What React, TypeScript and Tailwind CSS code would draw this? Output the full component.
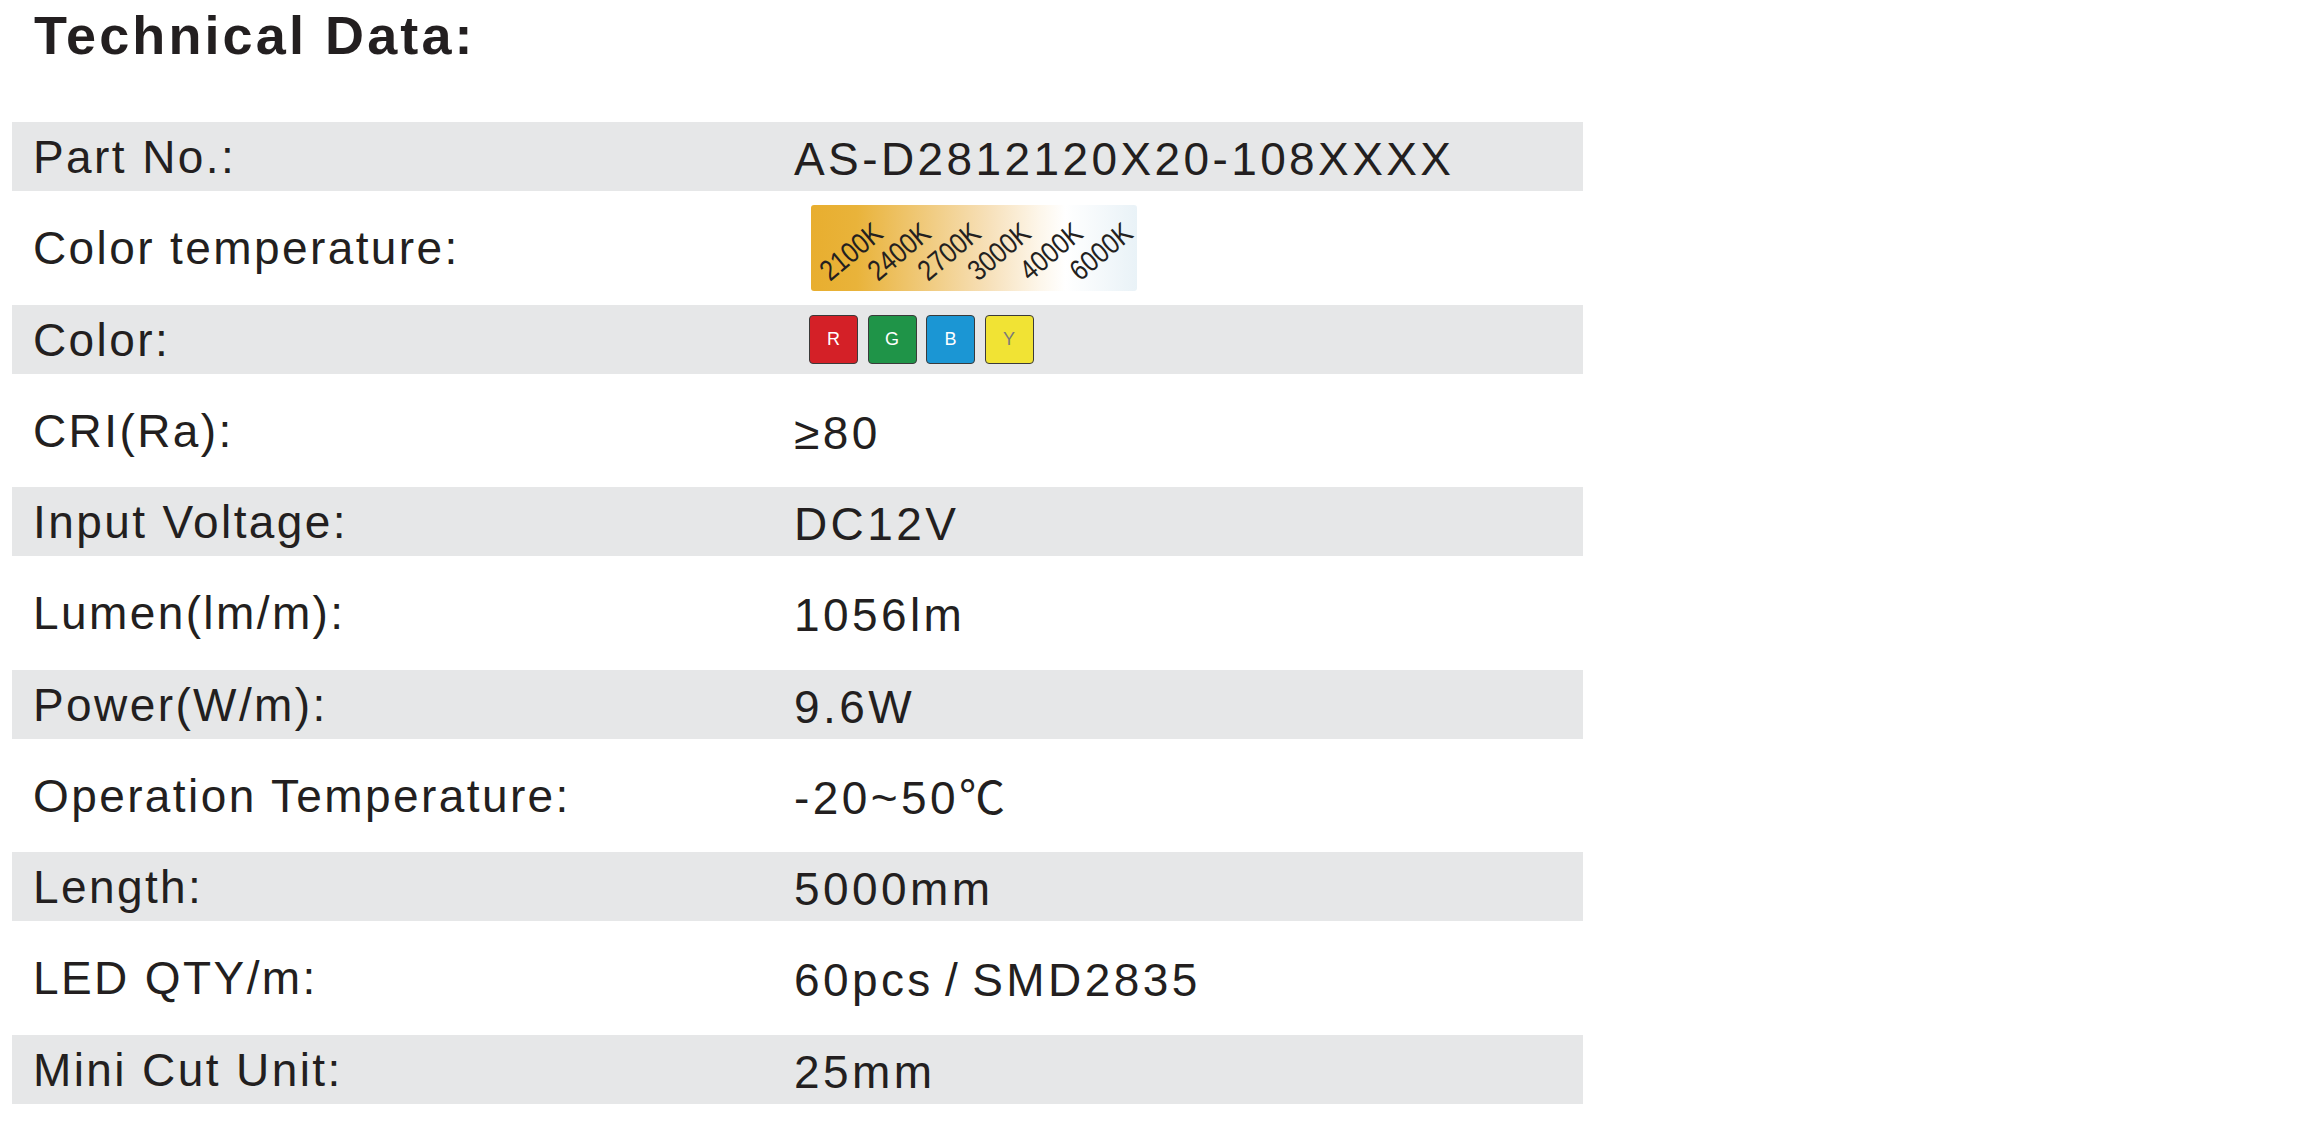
import React from "react";

const FONT = "font-['Liberation_Sans','Noto_Sans_CJK_SC',sans-serif]";

function ColorTemp() {
  const labels = [
    { t: "2100K", x: 19 },
    { t: "2400K", x: 67 },
    { t: "2700K", x: 117 },
    { t: "3000K", x: 167 },
    { t: "4000K", x: 219 },
    { t: "6000K", x: 269 },
  ];
  return (
    <svg width="326" height="86" viewBox="0 0 326 86" className="block tracking-normal" letterSpacing="0">
      <defs>
        <linearGradient id="ctgrad" x1="0" y1="0" x2="1" y2="0">
          <stop offset="0" stopColor="#e8ae2f" />
          <stop offset="0.14" stopColor="#e9b33a" />
          <stop offset="0.35" stopColor="#f0ca7c" />
          <stop offset="0.55" stopColor="#f7e1bb" />
          <stop offset="0.7" stopColor="#fdf6ea" />
          <stop offset="0.78" stopColor="#ffffff" />
          <stop offset="1" stopColor="#e9f2f7" />
        </linearGradient>
      </defs>
      <rect x="0" y="0" width="326" height="86" rx="3" fill="url(#ctgrad)" />
      {labels.map((l) => (
        <text
          key={l.t}
          x={0}
          y={0}
          transform={`translate(${l.x} 77) rotate(-40) scale(0.85 1)`}
          fontSize="29"
          fill="#231f20"
          letterSpacing="0"
          fontFamily="Liberation Sans, Arial, sans-serif"
        >
          {l.t}
        </text>
      ))}
    </svg>
  );
}

function Swatches() {
  return (
    <div className="flex gap-[9.5px] tracking-normal">
      <div className="w-[49px] h-[49px] rounded-[4px] border border-[#3a3a3a] bg-[#d42027] flex items-center justify-center text-white text-[18px] font-light">R</div>
      <div className="w-[49px] h-[49px] rounded-[4px] border border-[#3a3a3a] bg-[#1f9448] flex items-center justify-center text-white text-[18px] font-light">G</div>
      <div className="w-[49px] h-[49px] rounded-[4px] border border-[#3a3a3a] bg-[#1b96d4] flex items-center justify-center text-white text-[18px] font-light">B</div>
      <div className="w-[49px] h-[49px] rounded-[4px] border border-[#3a3a3a] bg-[#f1e334] flex items-center justify-center text-[#7a7a7a] text-[18px] font-light">Y</div>
    </div>
  );
}

type Row = { label: string; value: React.ReactNode; gray: boolean; h: string };

const rows: Row[] = [
  { label: "Part No.:", value: "AS-D2812120X20-108XXXX", gray: true, h: "h-[69px]" },
  { label: "Color temperature:", value: <div className="ml-[17px]"><ColorTemp /></div>, gray: false, h: "h-[114px]" },
  { label: "Color:", value: <div className="ml-[15px]"><Swatches /></div>, gray: true, h: "h-[69px]" },
  { label: "CRI(Ra):", value: "≥80", gray: false, h: "h-[113px]" },
  { label: "Input Voltage:", value: "DC12V", gray: true, h: "h-[69px]" },
  { label: "Lumen(lm/m):", value: "1056lm", gray: false, h: "h-[114px]" },
  { label: "Power(W/m):", value: "9.6W", gray: true, h: "h-[69px]" },
  { label: "Operation Temperature:", value: "-20~50℃", gray: false, h: "h-[113px]" },
  { label: "Length:", value: "5000mm", gray: true, h: "h-[69px]" },
  {
    label: "LED QTY/m:",
    value: <span className="[word-spacing:-5px]">60pcs / SMD2835</span>,
    gray: false,
    h: "h-[114px]",
  },
  { label: "Mini Cut Unit:", value: "25mm", gray: true, h: "h-[69px]" },
];

export default function App() {
  return (
    <div className={`min-h-screen w-full bg-white text-[#231f20] ${FONT} pt-[8px] pl-[12px]`}>
      <h1 className="ml-[22px] text-[54px] leading-none font-bold tracking-[3.1px]">Technical Data:</h1>
      <div className="mt-[60px] w-[1571px] flex flex-col">
        {rows.map((r, i) => (
          <div
            key={r.label}
            className={`${r.h} flex items-center ${r.gray ? "bg-[#e6e7e8]" : "bg-white"}`}
          >
            <div className="w-[782px] pl-[21px] text-[46px] leading-none tracking-[2.4px]">{r.label}</div>
            {i === 1 || i === 2 ? (
              <div className="flex-1">{r.value}</div>
            ) : (
              <div className="flex-1 text-[46px] leading-none tracking-[3.4px] pt-[4px]">{r.value}</div>
            )}
          </div>
        ))}
      </div>
    </div>
  );
}
